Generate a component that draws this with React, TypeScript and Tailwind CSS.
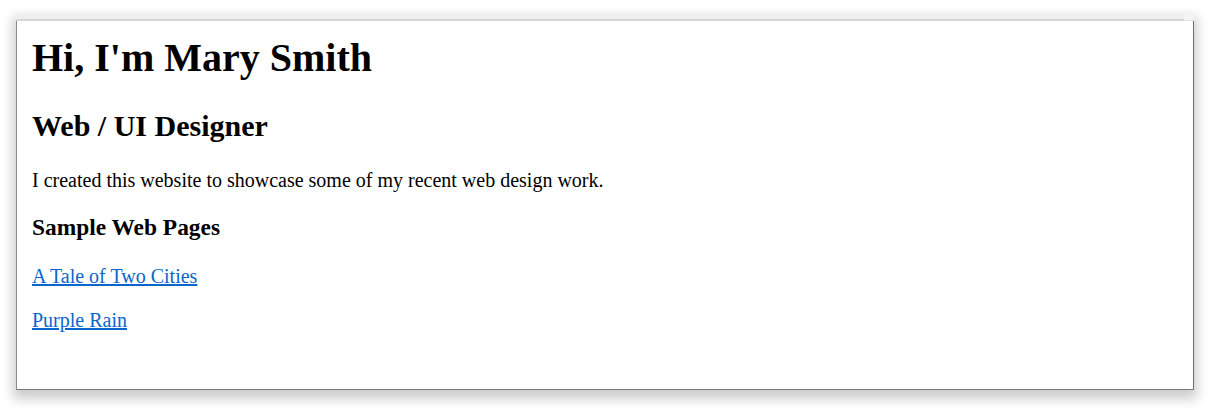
export default function App() {
  return (
    <div className="h-[408px] w-[1210px] bg-white pt-[14px] pl-[16px] overflow-hidden" style={{ fontFamily: '"Liberation Serif", "Times New Roman", serif' }}>
      <div className="w-[1178px] shadow-[0_6px_11px_3px_rgba(0,0,0,0.2)]">
        {/* top strip */}
        <div className="flex h-[7px]">
          <div className="flex-1 bg-[#efefef] border-b-2 border-[#d6d6d6]" />
          <div className="w-[10px] bg-[#f4f4f4] border-b border-[#e4e4e4]" />
        </div>
        {/* page */}
        <div className="h-[369px] bg-white border-l border-r border-b border-l-[#8a8a8a] border-r-[#6f6f6f] border-b-[#787878] pl-[15px] pt-[14px] text-black">
          <h1 className="text-[40px] leading-[46px] font-bold">Hi, I'm Mary Smith</h1>
          <h2 className="mt-[28px] text-[30px] leading-[34px] font-bold">Web / UI Designer</h2>
          <p className="mt-[26px] text-[20px] leading-[23px]">
            I created this website to showcase some of my recent web design work.
          </p>
          <h3 className="mt-[22px] text-[23.4px] leading-[27px] font-bold">Sample Web Pages</h3>
          <p className="mt-[24px] text-[20px] leading-[23px]">
            <a href="#" className="text-[#0a66cc] underline">A Tale of Two Cities</a>
          </p>
          <p className="mt-[21px] text-[20px] leading-[23px]">
            <a href="#" className="text-[#0a66cc] underline">Purple Rain</a>
          </p>
        </div>
      </div>
    </div>
  )
}
